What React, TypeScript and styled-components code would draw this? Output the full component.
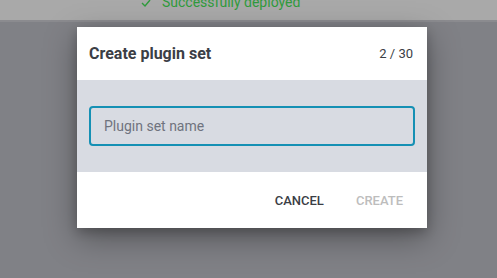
import React from 'react'
import styled, { createGlobalStyle } from 'styled-components'

const GlobalStyle = createGlobalStyle`
  html, body {
    margin: 0;
    padding: 0;
    width: 497px;
    height: 278px;
    overflow: hidden;
    background: #808186;
    font-family: Roboto, 'Liberation Sans', sans-serif;
  }
`

const Page = styled.div`
  width: 497px;
  height: 278px;
  display: flex;
  flex-direction: column;
  background: #808186;
`

// the page behind the dialog, dimmed by the overlay
const Banner = styled.div`
  height: 20px;
  background: #a9a9a9;
  border-bottom: 2px solid #8b8b8f;
  display: flex;
  align-items: flex-end;
  padding-left: 141px;
  gap: 11px;
  overflow: hidden;
  color: #2f9a3c;
  font-size: 14px;
  line-height: 16px;

  span {
    transform: translateY(-10px);
  }
`

const DialogArea = styled.div`
  display: flex;
  padding: 5px 0 0 77px;
`

const Dialog = styled.div`
  width: 350px;
  display: flex;
  flex-direction: column;
  background: #fff;
  box-shadow: 0 10px 30px rgba(0, 0, 0, 0.35), 0 4px 10px rgba(0, 0, 0, 0.2);
`

const Header = styled.div`
  height: 53px;
  display: flex;
  align-items: center;
  justify-content: space-between;
  padding: 0 14px 0 12px;
  box-sizing: border-box;
`

const Title = styled.h2`
  margin: 0;
  font-size: 16px;
  font-weight: 700;
  color: #3b3e45;
`

const Counter = styled.span`
  font-size: 13px;
  color: #3b3e45;
`

const Body = styled.div`
  height: 92px;
  background: #d8dbe2;
  display: flex;
  align-items: center;
  padding: 0 12px;
`

const NameInput = styled.input`
  width: 100%;
  height: 40px;
  box-sizing: border-box;
  border: 2px solid #1590b4;
  border-radius: 4px;
  background: transparent;
  padding: 0 13px;
  font-family: inherit;
  font-size: 14px;
  color: #3b3e45;
  outline: none;
  caret-color: #000;

  &::placeholder {
    color: #6f737e;
  }
`

const Footer = styled.div`
  height: 56px;
  display: flex;
  align-items: center;
  justify-content: flex-end;
  gap: 32px;
  padding-right: 24px;
`

const TextButton = styled.button<{ disabled?: boolean }>`
  border: none;
  background: none;
  padding: 0;
  font-family: inherit;
  font-size: 13px;
  font-weight: 500;
  color: ${p => (p.disabled ? '#bdbdbd' : '#3b3e45')};
  cursor: ${p => (p.disabled ? 'default' : 'pointer')};
`

const App: React.FC = () => {
  return (
    <Page>
      <GlobalStyle />
      <Banner>
        <span>
          <svg width="10" height="8" viewBox="0 0 10 8" fill="none">
            <path d="M1 4l3 3 5-6" stroke="#2f9a3c" strokeWidth="1.4" />
          </svg>
        </span>
        <span>Successfully deployed</span>
      </Banner>
      <DialogArea>
        <Dialog>
          <Header>
            <Title>Create plugin set</Title>
            <Counter>2 / 30</Counter>
          </Header>
          <Body>
            <NameInput placeholder='Plugin set name' autoFocus />
          </Body>
          <Footer>
            <TextButton>CANCEL</TextButton>
            <TextButton disabled>CREATE</TextButton>
          </Footer>
        </Dialog>
      </DialogArea>
    </Page>
  )
}

export default App
